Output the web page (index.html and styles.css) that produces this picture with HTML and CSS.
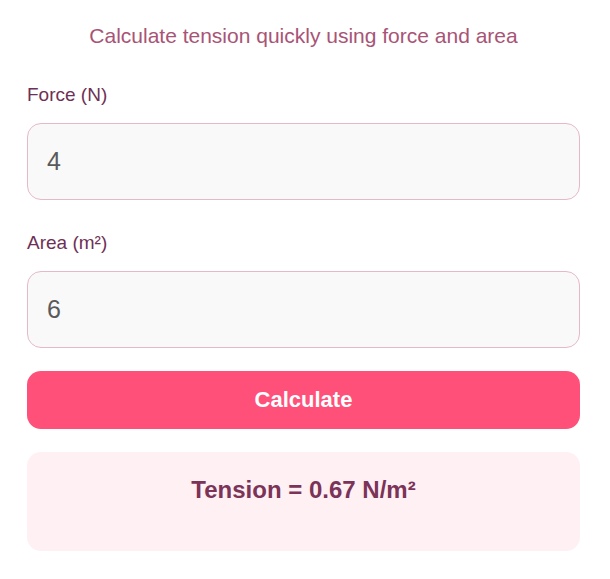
FILE: index.html
```html
<!DOCTYPE html>
<html lang="en">
<head>
<meta charset="utf-8">
<title>Tension Calculator</title>
<link rel="stylesheet" href="styles.css">
</head>
<body>
<main class="calc">
  <p class="calc-subtitle">Calculate tension quickly using force and area</p>
  <div class="field">
    <label class="field-label" for="force">Force (N)</label>
    <input class="field-input" id="force" type="text" value="4">
  </div>
  <div class="field">
    <label class="field-label" for="area">Area (m²)</label>
    <input class="field-input" id="area" type="text" value="6">
  </div>
  <button class="calc-btn" type="button">Calculate</button>
  <div class="calc-result">Tension = 0.67 N/m²</div>
</main>
</body>
</html>
```
FILE: styles.css
```css
* { box-sizing: border-box; }

body {
  margin: 0;
  background: #ffffff;
  font-family: "Liberation Sans", Arial, sans-serif;
}

.calc {
  padding: 24px 30px 0 27px;
  display: flex;
  flex-direction: column;
}

.calc-subtitle {
  margin: 0 0 36px;
  text-align: center;
  font-size: 21px;
  line-height: 24px;
  color: #a85476;
}

.field {
  display: flex;
  flex-direction: column;
  margin-bottom: 23px;
}

.field + .field {
  margin-top: 9px;
}

.field-label {
  font-size: 19px;
  line-height: 22px;
  color: #6e3155;
  margin-bottom: 17px;
}

.field-input {
  height: 77px;
  padding: 0 19px;
  border: 1px solid #e6b8c9;
  border-radius: 14px;
  background: #f9f9f9;
  font-family: "Liberation Sans", Arial, sans-serif;
  font-size: 25px;
  color: #5a5a5a;
  outline: none;
}

.calc-btn {
  height: 58px;
  border: none;
  border-radius: 14px;
  background: #ff5079;
  color: #ffffff;
  font-family: "Liberation Sans", Arial, sans-serif;
  font-weight: bold;
  font-size: 22px;
}

.calc-result {
  margin-top: 23px;
  height: 99px;
  padding-top: 25px;
  border-radius: 14px;
  background: #fff0f4;
  text-align: center;
  font-weight: bold;
  font-size: 24px;
  line-height: 26px;
  color: #7b3358;
}
```
